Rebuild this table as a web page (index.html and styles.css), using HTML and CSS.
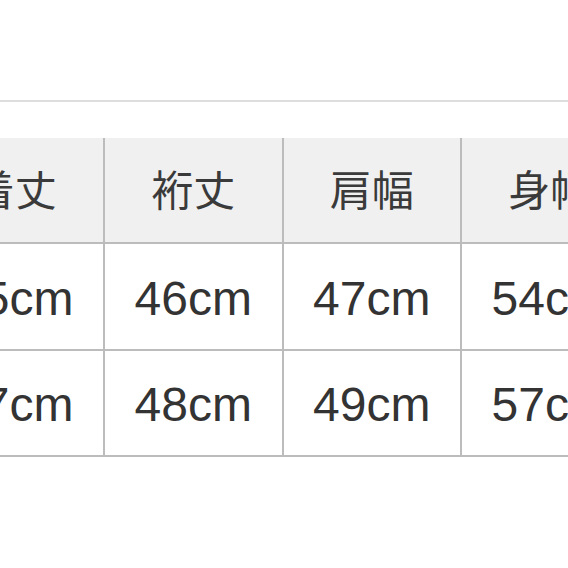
FILE: index.html
```html
<!DOCTYPE html>
<html lang="ja">
<head>
<meta charset="utf-8">
<title>サイズ表</title>
<link rel="stylesheet" href="styles.css">
</head>
<body>
<div class="rule"></div>
<div class="size-table">
  <div class="cell head">着丈</div>
  <div class="cell head">裄丈</div>
  <div class="cell head">肩幅</div>
  <div class="cell head">身幅</div>
  <div class="cell">65cm</div>
  <div class="cell">46cm</div>
  <div class="cell">47cm</div>
  <div class="cell">54cm</div>
  <div class="cell">67cm</div>
  <div class="cell">48cm</div>
  <div class="cell">49cm</div>
  <div class="cell">57cm</div>
</div>
</body>
</html>
```
FILE: styles.css
```css
html, body {
  margin: 0;
  padding: 0;
  background: #fff;
  overflow: hidden;
}
body {
  width: 568px;
  height: 568px;
  font-family: "Liberation Sans", "Noto Sans CJK JP", sans-serif;
  color: #333;
}
.rule {
  margin-top: 100px;
  height: 2px;
  background: #dedede;
}
.size-table {
  margin-top: 36px;
  margin-left: -73.5px;
  display: grid;
  grid-template-columns: repeat(4, 178.5px);
  grid-template-rows: 106px 107px 106px;
  width: 714px;
}
.cell {
  border-right: 2px solid #bcbcbc;
  border-bottom: 2px solid #bcbcbc;
  display: flex;
  align-items: center;
  justify-content: center;
  font-size: 48px;
  padding-top: 3px;
  background: #fff;
  white-space: nowrap;
}
.cell.head {
  background: #f0f0f0;
  font-family: "Noto Sans CJK JP", sans-serif;
  font-size: 42px;
  padding-top: 0;
  padding-bottom: 5px;
  color: #3a3a3a;
}
```
